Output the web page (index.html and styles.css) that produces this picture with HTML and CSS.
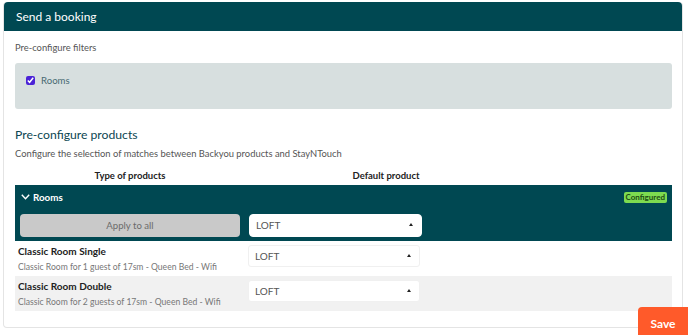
FILE: index.html
```html
<!DOCTYPE html>
<html lang="en">
<head>
  <meta charset="UTF-8">
  <title>Send a booking</title>
  <link rel="stylesheet" href="styles.css">
</head>
<body>
<div class="card">
  <div class="card-head">Send a booking</div>
  <div class="card-body">
    <div class="label">Pre-configure filters</div>
    <div class="filters">
      <label class="check">
        <input type="checkbox" checked>
        <span>Rooms</span>
      </label>
    </div>

    <h2>Pre-configure products</h2>
    <div class="label sub">Configure the selection of matches between Backyou products and StayNTouch</div>

    <div class="cols">
      <div class="col-a">Type of products</div>
      <div class="col-b">Default product</div>
    </div>

    <div class="group">
      <div class="group-head">
        <svg class="chev" width="9" height="6" viewBox="0 0 9 6"><polyline points="0.8,0.8 4.5,4.8 8.2,0.8" fill="none" stroke="#fff" stroke-width="1.4"/></svg>
        <span class="group-title">Rooms</span>
        <span class="badge">Configured</span>
      </div>
      <div class="group-row">
        <div class="col-a"><button class="apply">Apply to all</button></div>
        <div class="select big">LOFT<span class="caret"></span></div>
      </div>
    </div>

    <div class="row">
      <div class="col-a">
        <div class="name">Classic Room Single</div>
        <div class="desc">Classic Room for 1 guest of 17sm - Queen Bed - Wifi</div>
      </div>
      <div class="select">LOFT<span class="caret"></span></div>
    </div>
    <div class="row alt">
      <div class="col-a">
        <div class="name">Classic Room Double</div>
        <div class="desc">Classic Room for 2 guests of 17sm - Queen Bed - Wifi</div>
      </div>
      <div class="select">LOFT<span class="caret"></span></div>
    </div>
  </div>
</div>
<button class="save">Save</button>
</body>
</html>
```

FILE: styles.css
```css
body {
  margin: 0;
  background: #fff;
  font-family: Lato, 'Noto Sans', sans-serif;
  color: #333;
}
.card {
  margin: 2px 5px 0 3px;
  border: 1px solid #e4e4e4;
  border-top: none;
  border-radius: 4px;
  height: 326px;
  box-sizing: border-box;
}
.card-head {
  background: #004852;
  color: #fff;
  height: 29px;
  line-height: 30px;
  padding: 0 12px;
  font-size: 12px;
  border-radius: 4px 4px 0 0;
}
.card-body {
  padding: 10px 10px 0 11px;
}
.label {
  font-size: 9.4px;
  color: #555;
  line-height: 14px;
}
.filters {
  margin-top: 8px;
  background: #d7dfdf;
  border-radius: 3px;
  height: 46px;
  padding: 12px 11px 0;
  box-sizing: border-box;
}
.check {
  display: flex;
  align-items: center;
  gap: 6px;
  font-size: 9.6px;
  color: #476a72;
}
.check input {
  margin: 0;
  width: 9px;
  height: 9px;
  accent-color: #4a22d6;
}
h2 {
  margin: 17px 0 4px;
  font-size: 12.2px;
  font-weight: 400;
  color: #0c4652;
  line-height: 17px;
}
.sub {
  margin-bottom: 7px;
}
.cols {
  display: flex;
  font-size: 9.5px;
  font-weight: 700;
  line-height: 16px;
  height: 17px;
  color: #222;
}
.col-a {
  width: 230px;
  flex: none;
  text-align: center;
}
.col-b {
  width: 282px;
  text-align: center;
}
.group {
  background: #004852;
  padding: 0 0 4px;
}
.group-head {
  display: flex;
  align-items: center;
  height: 24px;
  margin-bottom: 4px;
  padding: 0 5px 0 6px;
  color: #fff;
  font-size: 9.8px;
  font-weight: 700;
}
.chev {
  margin-right: 3px;
}
.badge {
  margin-left: auto;
  background: #7ddb50;
  color: #1d4d12;
  font-size: 8px;
  border-radius: 2px;
  padding: 1px 2px;
  line-height: 9px;
}
.group-row {
  display: flex;
  align-items: center;
}
.group-row .col-a {
  padding: 0 5px;
  box-sizing: border-box;
}
.apply {
  width: 100%;
  height: 23px;
  border: none;
  border-radius: 4px;
  background: #c9c9c9;
  color: #6b6b6b;
  font-family: inherit;
  font-size: 9.6px;
  padding: 0;
}
.select {
  position: relative;
  width: 172px;
  height: 22px;
  margin-left: 3px;
  box-sizing: border-box;
  border: 1px solid #f0f0f0;
  border-radius: 3px;
  background: #fff;
  font-size: 10px;
  color: #555;
  line-height: 20px;
  padding-left: 6px;
}
.row .select {
  align-self: flex-start;
  margin-top: 4px;
}
.select.big {
  height: 23px;
  width: 173px;
  margin-left: 4px;
  line-height: 21px;
  border-color: #fff;
  border-radius: 4px;
}
.caret {
  position: absolute;
  right: 8px;
  top: 8px;
  border-left: 2.5px solid transparent;
  border-right: 2.5px solid transparent;
  border-bottom: 3px solid #222;
}
.row {
  display: flex;
  align-items: center;
  height: 35px;
}
.row.alt {
  background: #f1f1f1;
}
.row .col-a {
  text-align: left;
  padding-left: 3px;
  box-sizing: border-box;
}
.name {
  font-size: 10px;
  font-weight: 700;
  color: #222;
  line-height: 14px;
}
.desc {
  font-size: 8.6px;
  color: #777;
  line-height: 14px;
  margin-top: 2px;
}
.save {
  position: fixed;
  right: 0;
  bottom: 0;
  width: 50px;
  height: 28px;
  border: none;
  border-radius: 4px 0 0 0;
  background: #ff5a2a;
  color: #fff;
  font-family: inherit;
  font-size: 12px;
  font-weight: 700;
  padding: 4px 0 0;
}
```
